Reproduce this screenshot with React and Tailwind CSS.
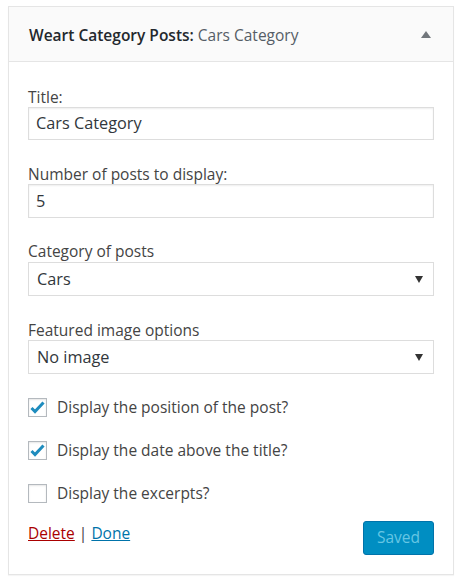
import React from "react";

const font = { fontFamily: '"Open Sans", "Noto Sans", sans-serif' };

function Caret() {
  return (
    <svg width="8" height="7" viewBox="0 0 8 7" className="block">
      <path d="M0 0 H8 L4 7 Z" fill="#333" />
    </svg>
  );
}

function Check({ checked }) {
  return (
    <span className="flex h-[19px] w-[19px] shrink-0 items-center justify-center border border-[#b4b9be] bg-white shadow-[inset_0_1px_2px_rgba(0,0,0,0.1)]">
      {checked && (
        <svg width="15" height="13" viewBox="0 0 15 13">
          <path d="M1.5 7 L5 10.5 L13.5 1.5" fill="none" stroke="#1e8cbe" strokeWidth="3" />
        </svg>
      )}
    </span>
  );
}

export default function App() {
  return (
    <div className="min-h-[585px] bg-white pt-[6px] pl-[8px]" style={font}>
      <div className="w-[446px] border border-[#e5e5e5] bg-white shadow-[0_1px_1px_rgba(0,0,0,0.04)]">
        <div className="flex h-[55px] items-center justify-between border-b border-[#e5e5e5] bg-[#fafafa] pl-[20px] pr-[22px]">
          <div className="pt-[3px] text-[15.5px] text-[#23282d]">
            <span className="font-semibold">Weart Category Posts:</span>
            <span className="font-medium text-[#555d66]"> Cars Category</span>
          </div>
          <svg width="10" height="7" viewBox="0 0 10 7"><path d="M0 7 L5 0 L10 7 Z" fill="#72777c" /></svg>
        </div>
        <div className="px-[19px] pt-[25px] pb-[19px] text-[15.5px] text-[#444]">
          <div className="leading-[20px]">Title:</div>
          <div className="flex h-[33px] items-center border border-[#ddd] bg-white px-[7px] text-[16.3px] text-[#32373c] shadow-[inset_0_1px_2px_rgba(0,0,0,0.07)]">Cars Category</div>
          <div className="mt-[24px] leading-[20px]">Number of posts to display:</div>
          <div className="flex h-[34px] items-center border border-[#ddd] bg-white px-[7px] text-[16.3px] text-[#32373c] shadow-[inset_0_1px_2px_rgba(0,0,0,0.07)]">5</div>
          <div className="mt-[23px] leading-[20px]">Category of posts</div>
          <div className="mt-[1px] flex h-[34px] items-center justify-between border border-[#ddd] bg-white pl-[8px] pr-[10px] text-[16.3px] text-[#32373c]">
            <span>Cars</span><Caret />
          </div>
          <div className="mt-[24px] leading-[20px]">Featured image options</div>
          <div className="flex h-[34px] items-center justify-between border border-[#ddd] bg-white pl-[8px] pr-[10px] text-[16.3px] text-[#32373c]">
            <span>No image</span><Caret />
          </div>
          <div className="mt-[24px] flex h-[19px] items-center gap-[10px]"><Check checked /><span>Display the position of the post?</span></div>
          <div className="mt-[24px] flex h-[19px] items-center gap-[10px]"><Check checked /><span>Display the date above the title?</span></div>
          <div className="mt-[24px] flex h-[19px] items-center gap-[10px]"><Check /><span>Display the excerpts?</span></div>
          <div className="mt-[18px] flex items-start justify-between">
            <div className="pt-[2px] leading-[20px]">
              <a className="text-[#a00] underline">Delete</a>
              <span className="text-[#444]"> | </span>
              <a className="text-[#0073aa] underline">Done</a>
            </div>
            <button className="h-[34px] w-[71px] rounded-[3px] border border-[#0073aa] bg-[#008ec2] text-[15.5px] text-[#66c6e4]">Saved</button>
          </div>
        </div>
      </div>
    </div>
  );
}
